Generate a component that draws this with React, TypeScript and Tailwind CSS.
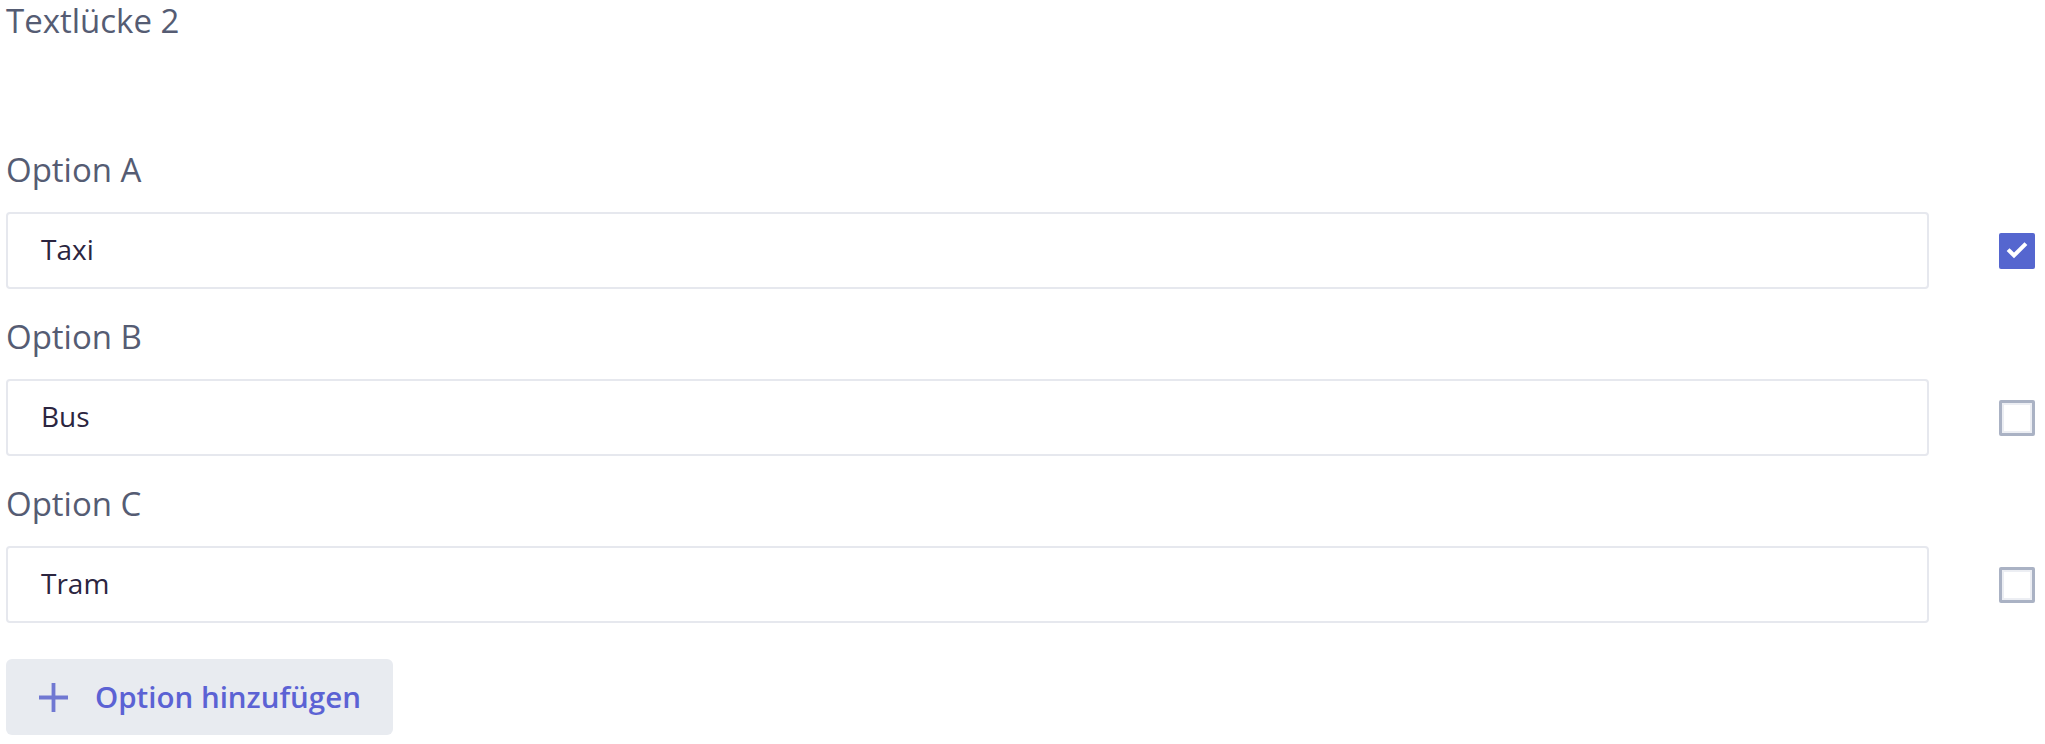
import { useState } from "react";

type Option = { label: string; value: string; correct: boolean };

const initialOptions: Option[] = [
  { label: "Option A", value: "Taxi", correct: true },
  { label: "Option B", value: "Bus", correct: false },
  { label: "Option C", value: "Tram", correct: false },
];

function CheckBox({ checked, onToggle }: { checked: boolean; onToggle: () => void }) {
  return (
    <button
      type="button"
      onClick={onToggle}
      className={`flex h-[36px] w-[36px] shrink-0 items-center justify-center rounded-[2px] ${
        checked
          ? "bg-[#5566cf]"
          : "border-[3px] border-[#aab2c4] bg-white shadow-[inset_0_0_0_2px_#eceef3]"
      }`}
    >
      {checked && (
        <svg width="36" height="36" viewBox="0 0 36 36" fill="none">
          <polyline
            points="10.5,18 15,22.5 25.5,12"
            stroke="white"
            strokeWidth="4"
            strokeLinecap="square"
          />
        </svg>
      )}
    </button>
  );
}

export default function App() {
  const [options, setOptions] = useState<Option[]>(initialOptions);

  const toggle = (i: number) =>
    setOptions((prev) =>
      prev.map((o, idx) => (idx === i ? { ...o, correct: !o.correct } : o)),
    );

  return (
    <main className="min-h-screen bg-white pl-[6px] pr-[10px] font-['Open_Sans',sans-serif]">
      <div className="pt-[1px] text-[33px] leading-[40px] text-[#555c73]">Textlücke 2</div>

      <div className="mt-[109px] flex flex-col gap-[28px]">
        {options.map((o, i) => (
          <div key={o.label}>
            <div className="h-[40px] text-[33px] leading-[40px] text-[#555c73]">{o.label}</div>
            <div className="mt-[22px] flex items-center gap-[70px]">
              <div className="flex h-[77px] flex-1 items-center rounded-[4px] border-2 border-[#e6e8ee] bg-white pb-[3px] pl-[33px] text-[28px] leading-[40px] text-[#2b2540]">
                {o.value}
              </div>
              <CheckBox checked={o.correct} onToggle={() => toggle(i)} />
            </div>
          </div>
        ))}
      </div>

      <button
        type="button"
        className="mt-[36px] flex h-[76px] w-[387px] items-center gap-[27px] rounded-[6px] bg-[#e8ebf0] pl-[33px] text-[29.5px] font-semibold leading-[40px] text-[#5b62d4]"
      >
        <svg width="29" height="29" viewBox="0 0 29 29" fill="none">
          <path d="M14.5 0V29M0 14.5H29" stroke="#7078d2" strokeWidth="3.8" />
        </svg>
        Option hinzufügen
      </button>
    </main>
  );
}
